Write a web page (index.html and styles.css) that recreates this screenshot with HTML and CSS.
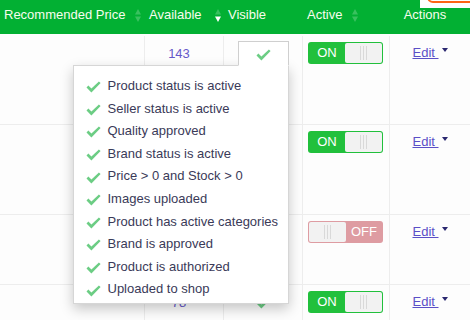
FILE: index.html
```html
<!DOCTYPE html>
<html lang="en">
<head>
<meta charset="utf-8">
<title>Products</title>
<link rel="stylesheet" href="styles.css">
</head>
<body>
<div class="page">
  <div class="grid">
    <div class="th">Recommended Price<svg class="sort" width="6" height="13" viewBox="0 0 6 13"><path class="dim" d="M3 0L6 5.5H0z"/><path class="dim" d="M3 13L6 7.5H0z"/></svg></div>
    <div class="th">Available<svg class="sort sort-wide" width="6" height="13" viewBox="0 0 6 13"><path class="dim" d="M3 0L6 5.5H0z"/><path class="on" d="M3 13L6 7.5H0z"/></svg></div>
    <div class="th">Visible</div>
    <div class="th">Active<svg class="sort" width="6" height="13" viewBox="0 0 6 13"><path class="dim" d="M3 0L6 5.5H0z"/><path class="dim" d="M3 13L6 7.5H0z"/></svg></div>
    <div class="th th-actions">Actions</div>

    <!-- row 1 -->
    <div class="td"></div>
    <div class="td td-num">143</div>
    <div class="td td-vis">
      <div class="dropdown">
        <button class="vis-btn vis-btn-open" type="button"><svg class="check" width="15" height="12" viewBox="0 0 15 12"><path d="M0.5 6.4L2.4 4.6L5.4 7.6L12.9 0.4L14.6 2.1L5.4 11.4Z"/></svg></button>
        <ul class="menu">
          <li><svg class="check" width="15" height="12" viewBox="0 0 15 12"><path d="M0.5 6.4L2.4 4.6L5.4 7.6L12.9 0.4L14.6 2.1L5.4 11.4Z"/></svg><span>Product status is active</span></li>
          <li><svg class="check" width="15" height="12" viewBox="0 0 15 12"><path d="M0.5 6.4L2.4 4.6L5.4 7.6L12.9 0.4L14.6 2.1L5.4 11.4Z"/></svg><span>Seller status is active</span></li>
          <li><svg class="check" width="15" height="12" viewBox="0 0 15 12"><path d="M0.5 6.4L2.4 4.6L5.4 7.6L12.9 0.4L14.6 2.1L5.4 11.4Z"/></svg><span>Quality approved</span></li>
          <li><svg class="check" width="15" height="12" viewBox="0 0 15 12"><path d="M0.5 6.4L2.4 4.6L5.4 7.6L12.9 0.4L14.6 2.1L5.4 11.4Z"/></svg><span>Brand status is active</span></li>
          <li><svg class="check" width="15" height="12" viewBox="0 0 15 12"><path d="M0.5 6.4L2.4 4.6L5.4 7.6L12.9 0.4L14.6 2.1L5.4 11.4Z"/></svg><span>Price &gt; 0 and Stock &gt; 0</span></li>
          <li><svg class="check" width="15" height="12" viewBox="0 0 15 12"><path d="M0.5 6.4L2.4 4.6L5.4 7.6L12.9 0.4L14.6 2.1L5.4 11.4Z"/></svg><span>Images uploaded</span></li>
          <li><svg class="check" width="15" height="12" viewBox="0 0 15 12"><path d="M0.5 6.4L2.4 4.6L5.4 7.6L12.9 0.4L14.6 2.1L5.4 11.4Z"/></svg><span>Product has active categories</span></li>
          <li><svg class="check" width="15" height="12" viewBox="0 0 15 12"><path d="M0.5 6.4L2.4 4.6L5.4 7.6L12.9 0.4L14.6 2.1L5.4 11.4Z"/></svg><span>Brand is approved</span></li>
          <li><svg class="check" width="15" height="12" viewBox="0 0 15 12"><path d="M0.5 6.4L2.4 4.6L5.4 7.6L12.9 0.4L14.6 2.1L5.4 11.4Z"/></svg><span>Product is authorized</span></li>
          <li><svg class="check" width="15" height="12" viewBox="0 0 15 12"><path d="M0.5 6.4L2.4 4.6L5.4 7.6L12.9 0.4L14.6 2.1L5.4 11.4Z"/></svg><span>Uploaded to shop</span></li>
        </ul>
      </div>
    </div>
    <div class="td td-active"><div class="toggle toggle-on"><span class="toggle-label">ON</span><span class="knob"><i class="grip"></i><i class="grip"></i><i class="grip"></i></span></div></div>
    <div class="td td-actions"><a class="edit" href="#">Edit </a><span class="caret"></span></div>

    <!-- row 2 -->
    <div class="td"></div>
    <div class="td td-num"></div>
    <div class="td td-vis"><button class="vis-btn" type="button"><svg class="check" width="15" height="12" viewBox="0 0 15 12"><path d="M0.5 6.4L2.4 4.6L5.4 7.6L12.9 0.4L14.6 2.1L5.4 11.4Z"/></svg></button></div>
    <div class="td td-active"><div class="toggle toggle-on"><span class="toggle-label">ON</span><span class="knob"><i class="grip"></i><i class="grip"></i><i class="grip"></i></span></div></div>
    <div class="td td-actions"><a class="edit" href="#">Edit </a><span class="caret"></span></div>

    <!-- row 3 -->
    <div class="td"></div>
    <div class="td td-num"></div>
    <div class="td td-vis"><button class="vis-btn" type="button"><svg class="check" width="15" height="12" viewBox="0 0 15 12"><path d="M0.5 6.4L2.4 4.6L5.4 7.6L12.9 0.4L14.6 2.1L5.4 11.4Z"/></svg></button></div>
    <div class="td td-active"><div class="toggle toggle-off"><span class="knob"><i class="grip"></i><i class="grip"></i><i class="grip"></i></span><span class="toggle-label">OFF</span></div></div>
    <div class="td td-actions"><a class="edit" href="#">Edit </a><span class="caret"></span></div>

    <!-- row 4 -->
    <div class="td"></div>
    <div class="td td-num">78</div>
    <div class="td td-vis"><button class="vis-btn" type="button"><svg class="check" width="15" height="12" viewBox="0 0 15 12"><path d="M0.5 6.4L2.4 4.6L5.4 7.6L12.9 0.4L14.6 2.1L5.4 11.4Z"/></svg></button></div>
    <div class="td td-active"><div class="toggle toggle-on"><span class="toggle-label">ON</span><span class="knob"><i class="grip"></i><i class="grip"></i><i class="grip"></i></span></div></div>
    <div class="td td-actions"><a class="edit" href="#">Edit </a><span class="caret"></span></div>
  </div>
  <div class="corner"><div class="corner-btn"></div></div>
</div>
</body>
</html>
```

FILE: styles.css
```css
html, body {
  margin: 0;
  padding: 0;
  background: #ffffff;
}

body {
  font-family: "Liberation Sans", Arial, sans-serif;
  font-size: 13px;
  color: #3a3a58;
}

.page {
  position: relative;
  width: 470px;
  height: 320px;
  overflow: hidden;
}

.grid {
  display: grid;
  grid-template-columns: 145px 79px 79px 87px 80px;
  grid-template-rows: 36px 89px 90px 70px 60px;
  background: #fdfdfd;
}

.th {
  box-sizing: border-box;
  display: flex;
  align-items: center;
  height: 36px;
  padding: 6px 0 10px 4px;
  line-height: 18px;
  background: #02b033;
  border-bottom: 2px solid #fdfdfd;
  color: #f8fdee;
  white-space: nowrap;
}

.th-actions {
  justify-content: center;
  padding-left: 0;
  padding-right: 10px;
}

.sort {
  flex: none;
  margin-left: 10px;
}

.sort-wide {
  margin-left: 13px;
}

.sort .dim {
  fill: rgba(255, 255, 255, 0.22);
}

.sort .on {
  fill: #ffffff;
}

.td {
  box-sizing: border-box;
  border-right: 1px solid #ededed;
  border-bottom: 1px solid #ededed;
  padding: 6px 0 0 0;
  line-height: 22px;
}

.td-num {
  text-align: center;
  padding-top: 7px;
  padding-right: 10px;
  color: #6659c9;
}

.td-vis {
  text-align: center;
  padding-top: 5px;
}

.td-active {
  padding-left: 5px;
}

.td-actions {
  text-align: center;
  border-right: none;
}

.dropdown {
  position: relative;
  display: inline-block;
  vertical-align: top;
}

.vis-btn {
  display: block;
  box-sizing: border-box;
  width: 51px;
  height: 25px;
  margin: 0 auto;
  padding: 0;
  border: 1px solid transparent;
  background: transparent;
  line-height: 0;
  text-align: center;
  cursor: pointer;
}

.vis-btn-open {
  position: relative;
  z-index: 11;
  padding-top: 3px;
  background: #ffffff;
  border-color: #cfcfcf;
  border-bottom-color: #ffffff;
}

.check {
  display: inline-block;
  fill: #6ccd84;
}

.menu {
  position: absolute;
  z-index: 10;
  top: calc(100% - 1px);
  right: 0;
  box-sizing: border-box;
  width: 216px;
  margin: 0;
  padding: 9px 0 2px;
  list-style: none;
  text-align: left;
  background: #ffffff;
  border: 1px solid rgba(0, 0, 0, 0.16);
  box-shadow: 0 5px 12px rgba(0, 0, 0, 0.22);
}

.menu li {
  display: flex;
  align-items: center;
  gap: 7px;
  height: 22.6px;
  padding-left: 12px;
  white-space: nowrap;
  color: #3a3a58;
  line-height: 22.6px;
}

.menu li .check {
  flex: none;
  position: relative;
  top: 1px;
}

.toggle {
  box-sizing: border-box;
  display: flex;
  width: 75px;
  height: 22px;
  padding: 1px;
  border-radius: 3px;
}

.toggle-on {
  background: #21c03c;
}

.toggle-off {
  background: #de9ca2;
}

.toggle-label {
  flex: 1;
  display: flex;
  align-items: center;
  justify-content: center;
  color: #ffffff;
  line-height: 20px;
}

.knob {
  display: flex;
  align-items: center;
  justify-content: center;
  gap: 2px;
  width: 37px;
  border-radius: 2px;
  background: #f2f2f2;
}

.grip {
  display: block;
  width: 1px;
  height: 14px;
  background: #d9d9d9;
}

.edit {
  color: #5b4fc7;
  text-decoration: underline;
}

.caret {
  display: inline-block;
  width: 0;
  height: 0;
  margin-left: 3px;
  vertical-align: 5px;
  border-top: 4px solid #2b2870;
  border-left: 3.5px solid transparent;
  border-right: 3.5px solid transparent;
}

.corner {
  position: absolute;
  top: 0;
  left: 420px;
  width: 50px;
  height: 8px;
  overflow: hidden;
  background: #ffffff;
}

.corner-btn {
  position: absolute;
  left: 7px;
  right: -12px;
  top: -20px;
  height: 23px;
  box-sizing: border-box;
  border: 2px solid #ff6414;
  border-radius: 6px;
}
```
